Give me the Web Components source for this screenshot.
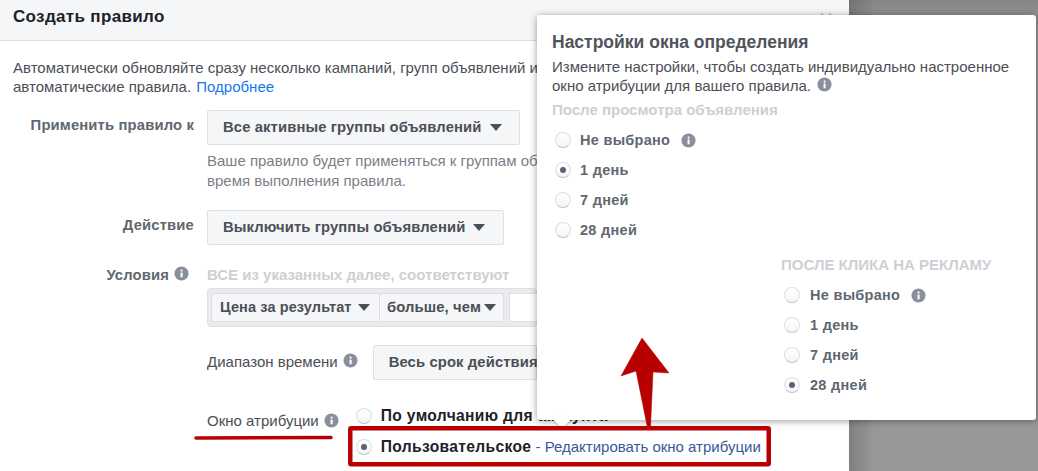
<!DOCTYPE html>
<html lang="ru"><head><meta charset="utf-8"><title>Создать правило</title>
<style>
html,body{margin:0;padding:0;height:471px;overflow:hidden}
body{background:linear-gradient(90deg,transparent 849px,rgba(0,0,0,.16) 849px,rgba(0,0,0,0) 875px),linear-gradient(rgba(0,0,0,.12),rgba(0,0,0,0) 30px),#989898;font:15px/19px "Liberation Sans",Arial,sans-serif;color:#4b4f56;position:relative;width:1038px}
</style></head><body>
<rule-dialog>
  <span slot="title">Создать правило</span>
  <div>Автоматически обновляйте сразу несколько кампаний, групп объявлений и<br>автоматические правила. <a style="color:#1877e6;text-decoration:none;margin-left:1px">Подробнее</a></div>
  <form-row label="Применить правило к" style="--mt:14px">
    <drop-select>Все активные группы объявлений</drop-select>
    <div style="color:#7b7f87;margin-top:6px;line-height:20px;white-space:nowrap">Ваше правило будет применяться к группам об<br>время выполнения правила.</div>
  </form-row>
  <form-row label="Действие" style="--mt:19px">
    <drop-select style="--w:297px">Выключить группы объявлений</drop-select>
  </form-row>
  <form-row label="Условия" info style="--mt:20px">
    <div style="font-weight:700;color:#ccd0d5;line-height:19px;white-space:nowrap">ВСЕ из указанных далее, соответствуют</div>
    <cond-group></cond-group>
    <sub-row label="Диапазон времени" style="margin-top:18px"><drop-select style="--w:164px;margin-left:15px">Весь срок действия</drop-select></sub-row>
    <attr-row></attr-row>
  </form-row>
</rule-dialog>
<window-popover></window-popover>
<note-marks></note-marks>

<script>
const INFO='<svg viewBox="0 0 16 16" width="15" height="15" style="display:block;flex:none"><circle cx="8" cy="8" r="7.5" fill="#8a8f9c"/><rect x="7" y="7" width="2.2" height="5" fill="#fff"/><circle cx="8.1" cy="4.8" r="1.2" fill="#fff"/></svg>';
class InfoDot extends HTMLElement{connectedCallback(){if(this.shadowRoot)return;this.attachShadow({mode:'open'}).innerHTML='<style>:host{display:inline-block;width:15px;height:15px;vertical-align:-1px}</style>'+INFO}}
customElements.define('info-dot',InfoDot);

class RuleDialog extends HTMLElement{constructor(){super();this.attachShadow({mode:'open'}).innerHTML=`<style>
:host{display:block;width:849px;height:471px;background:#fff;overflow:hidden}
header{height:40px;background:#f5f6f7;border-bottom:1px solid #dddfe2;display:flex;justify-content:space-between;padding:0 17px 0 13px}
.t{font-size:17px;line-height:33px;font-weight:700;color:#1d2129;letter-spacing:.02em;white-space:nowrap}
svg{margin-top:13px;display:block}
main{padding:17px 0 0 13px;white-space:nowrap}
</style><header><span class="t"><slot name="title"></slot></span><svg width="12" height="12" viewBox="0 0 12 12"><path d="M1 1L11 11M11 1L1 11" stroke="#bec2c9" stroke-width="2.500"/></svg></header><main><slot></slot></main>`}}
customElements.define('rule-dialog',RuleDialog);

class FormRow extends HTMLElement{connectedCallback(){if(this.shadowRoot)return;const l=this.getAttribute('label');const i=this.hasAttribute('info');this.attachShadow({mode:'open'}).innerHTML=`<style>
:host{display:flex;margin-top:var(--mt,0)}
.l{width:181px;flex:none;text-align:right;font-size:14.8px;font-weight:700;color:#606770;box-sizing:border-box;padding-top:${i?1:6}px;padding-right:${i?5:0}px;display:flex;justify-content:flex-end;gap:5px;align-items:flex-start;white-space:nowrap;letter-spacing:.01em}
.c{margin-left:13px;flex:1;min-width:0}
</style><div class="l"><span>${l}</span>${i?'<span>'+INFO+'</span>':''}</div><div class="c"><slot></slot></div>`}}
customElements.define('form-row',FormRow);

class DropSelect extends HTMLElement{constructor(){super();this.attachShadow({mode:'open'}).innerHTML=`<style>
:host{display:flex;align-items:center;box-sizing:border-box;width:var(--w,313px);height:var(--h,35px);padding:0 var(--pr,16px) 0 var(--pl,15px);background:#f5f6f7;border:1px solid #dddfe2;border-radius:2px;font-size:var(--fs,14.8px);font-weight:700;color:#4b4f56;white-space:nowrap;letter-spacing:.008em;flex:none}
.a{width:0;height:0;border:6px solid transparent;border-top:7px solid #4b4f56;border-bottom:0;margin-left:var(--ag,8px);flex:none}
</style><slot></slot><i class="a"></i>`}}
customElements.define('drop-select',DropSelect);

class CondGroup extends HTMLElement{constructor(){super();this.attachShadow({mode:'open'}).innerHTML=`<style>
:host{display:flex;align-items:center;box-sizing:border-box;width:330px;height:39px;margin-top:4px;padding:0 3px;background:#e9ebee;border:1px solid #dddfe2;border-radius:4px}
.in{width:120px;height:29px;background:#fff;border:1px solid #dddfe2;box-sizing:border-box;margin-left:5px;flex:none}
drop-select{--h:29px}
</style><drop-select style="--w:169px;--pl:8px;--pr:6px;--ag:6px;--fs:14.500px">Цена за результат</drop-select><drop-select style="--w:125px;--pl:7px;--pr:6px;--ag:3px;margin-left:-1px">больше, чем</drop-select><div class="in"></div>`}}
customElements.define('cond-group',CondGroup);

class SubRow extends HTMLElement{connectedCallback(){if(this.shadowRoot)return;this.attachShadow({mode:'open'}).innerHTML=`<style>
:host{display:flex;align-items:center;white-space:nowrap}
.n{margin-bottom:2px}
.i{margin:0 0 4px 5px}
</style><span class="n">${this.getAttribute('label')}</span><span class="i">${INFO}</span><slot></slot>`}}
customElements.define('sub-row',SubRow);

class RadioItem extends HTMLElement{connectedCallback(){if(this.shadowRoot)return;const on=this.hasAttribute('checked');this.attachShadow({mode:'open'}).innerHTML=`<style>
:host{display:flex;align-items:center;height:30px;white-space:nowrap;font-weight:700;color:#606770;letter-spacing:.02em}
.r{width:16px;height:16px;border-radius:50%;box-sizing:border-box;background:linear-gradient(#fff,#f4f5f6);border:1px solid #dddfe2;border-bottom-color:#bfc2c7;display:flex;align-items:center;justify-content:center;flex:none;margin-right:var(--gap,9px)}
.d{width:6px;height:6px;border-radius:50%;background:#5b6274}
</style><span class="r">${on?'<span class="d"></span>':''}</span><slot></slot>`}}
customElements.define('radio-item',RadioItem);

class AttrRow extends HTMLElement{constructor(){super();this.attachShadow({mode:'open'}).innerHTML=`<style>
:host{display:flex;margin-top:21px;white-space:nowrap}
.l{display:flex;align-items:center;height:30px;gap:5px;margin-top:4px;align-self:flex-start}
.o{margin:-1px 0 0 17px;--gap:9px}
radio-item{color:#1d2129;height:31px;letter-spacing:.022em;font-size:15.600px}
.link{font-weight:400;color:#365899;font-size:15px;letter-spacing:0}
</style><div class="l"><span>Окно атрибуции</span>${INFO}</div><div class="o"><radio-item>По умолчанию для аккаунта</radio-item><radio-item checked>Пользовательское<span class="link">&nbsp;- Редактировать окно атрибуции</span></radio-item></div>`}}
customElements.define('attr-row',AttrRow);

class WindowPopover extends HTMLElement{constructor(){super();this.attachShadow({mode:'open'}).innerHTML=`<style>
:host{position:absolute;z-index:0;left:537px;top:15px;width:499px;height:405px;box-sizing:border-box;padding:15px 15px 0;background:#fff;border-radius:3px;box-shadow:0 1px 7px rgba(0,0,0,.4);color:#4b4f56;white-space:nowrap}
:host::after{content:"";position:absolute;left:19px;bottom:-6px;width:12px;height:12px;background:#fff;transform:rotate(45deg);box-shadow:1px 1px 2px rgba(0,0,0,.2);z-index:-1}
h2{margin:1px 0 0;font-size:17.500px;line-height:22px;color:#50545c}
p{margin:4px 0 0;line-height:19px}
info-dot{margin-left:2px}
h3{margin:5px 0 0;font-size:15px;line-height:19px;color:#ccd0d5}
.col{margin-top:6px;margin-left:3px;font-size:14.500px}
.two{margin:0 0 0 229px}
.two h3{text-transform:uppercase;margin:0;line-height:19px}
.two .col{margin:6px 0 0 3px;--gap:10px}
.h{display:inline-flex;margin-left:11px}
</style>
<h2>Настройки окна определения</h2>
<p>Измените настройки, чтобы создать индивидуально настроенное<br>окно атрибуции для вашего правила. <info-dot></info-dot></p>
<h3>После просмотра объявления</h3>
<div class="col"><radio-item>Не выбрано<span class="h">${INFO}</span></radio-item><radio-item checked>1 день</radio-item><radio-item>7 дней</radio-item><radio-item>28 дней</radio-item></div>
<div class="two" style="margin-top:10px"><h3>После клика на рекламу</h3>
<div class="col"><radio-item>Не выбрано<span class="h">${INFO}</span></radio-item><radio-item>1 день</radio-item><radio-item>7 дней</radio-item><radio-item checked>28 дней</radio-item></div></div>`}}
customElements.define('window-popover',WindowPopover);

class NoteMarks extends HTMLElement{constructor(){super();this.attachShadow({mode:'open'}).innerHTML=`<style>
:host{position:absolute;left:0;top:0;width:1038px;height:471px;pointer-events:none}
svg{display:block}
</style><svg width="1038" height="471" viewBox="0 0 1038 471">
<rect x="350.250" y="428.250" width="418.500" height="36" fill="none" stroke="#b90000" stroke-width="4.500" rx="1"/>
<path d="M196 438 L331 437.500" fill="none" stroke="#b90000" stroke-width="3.500" stroke-linecap="round"/>
<path d="M642 338 L621 376 L636 371 L647.500 428 L650.500 428 L653 372 L669 373 Z" fill="#b90000" stroke="#b90000" stroke-width=".5"/>
</svg>`}}
customElements.define('note-marks',NoteMarks);
</script>
</body></html>
